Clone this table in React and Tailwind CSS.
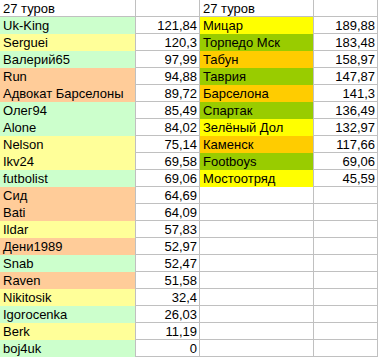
import React from 'react';

const left = [
  ['Uk-King', '121,84', 'bg-[#ccffcc]'],
  ['Serguei', '120,3', 'bg-[#ffff99]'],
  ['Валерий65', '97,99', 'bg-[#ccffcc]'],
  ['Run', '94,88', 'bg-[#ffcc99]'],
  ['Адвокат Барселоны', '89,72', 'bg-[#ffcc99]'],
  ['Олег94', '85,49', 'bg-[#ccffcc]'],
  ['Alone', '84,02', 'bg-[#ccffcc]'],
  ['Nelson', '75,14', 'bg-[#ffff99]'],
  ['Ikv24', '69,58', 'bg-[#ffff99]'],
  ['futbolist', '69,06', 'bg-[#ccffcc]'],
  ['Сид', '64,69', 'bg-[#ffcc99]'],
  ['Bati', '64,09', 'bg-[#ffcc99]'],
  ['Ildar', '57,83', 'bg-[#ffff99]'],
  ['Дени1989', '52,97', 'bg-[#ffcc99]'],
  ['Snab', '52,47', 'bg-[#ccffcc]'],
  ['Raven', '51,58', 'bg-[#ffcc99]'],
  ['Nikitosik', '32,4', 'bg-[#ffff99]'],
  ['Igorocenka', '26,03', 'bg-[#ccffcc]'],
  ['Berk', '11,19', 'bg-[#ffff99]'],
  ['boj4uk', '0', 'bg-[#ccffcc]'],
];

const right = [
  ['Мицар', '189,88', 'bg-[#ffff00]'],
  ['Торпедо Мск', '183,48', 'bg-[#99cc00]'],
  ['Табун', '158,97', 'bg-[#ffcc00]'],
  ['Таврия', '147,87', 'bg-[#99cc00]'],
  ['Барселона', '141,3', 'bg-[#ffcc00]'],
  ['Спартак', '136,49', 'bg-[#99cc00]'],
  ['Зелёный Дол', '132,97', 'bg-[#ffff00]'],
  ['Каменск', '117,66', 'bg-[#ffcc00]'],
  ['Footboys', '69,06', 'bg-[#99cc00]'],
  ['Мостоотряд', '45,59', 'bg-[#ffff00]'],
];

const Cell = ({ w, fill, right: alignRight, children }) => (
  <div
    className={`${w} h-[17px] shrink-0 border-r border-[#c0c0c0] leading-[18px] whitespace-nowrap overflow-hidden ${
      fill ? fill : 'border-b bg-white'
    } ${alignRight ? 'text-right pr-[2px]' : 'pl-[3px]'}`}
  >
    {children}
  </div>
);

export default function App() {
  const rows = [['27 туров', '', null], ...left];
  const rrows = [['27 туров', '', null], ...right];

  return (
    <div
      className="w-[378px] h-[358px] bg-white text-black text-[13px] overflow-hidden"
      style={{ fontFamily: '"Liberation Sans", Arial, sans-serif' }}
    >
      {rows.map((row, i) => {
        const r = rrows[i];
        return (
          <div key={i} className="flex">
            <Cell w="w-[136px]" fill={row[2]}>{row[0]}</Cell>
            <Cell w="w-[64px]" right>{row[1]}</Cell>
            <Cell w="w-[114px]" fill={r ? r[2] : null}>{r ? r[0] : ''}</Cell>
            <Cell w="w-[64px]" right>{r ? r[1] : ''}</Cell>
          </div>
        );
      })}
    </div>
  );
}
